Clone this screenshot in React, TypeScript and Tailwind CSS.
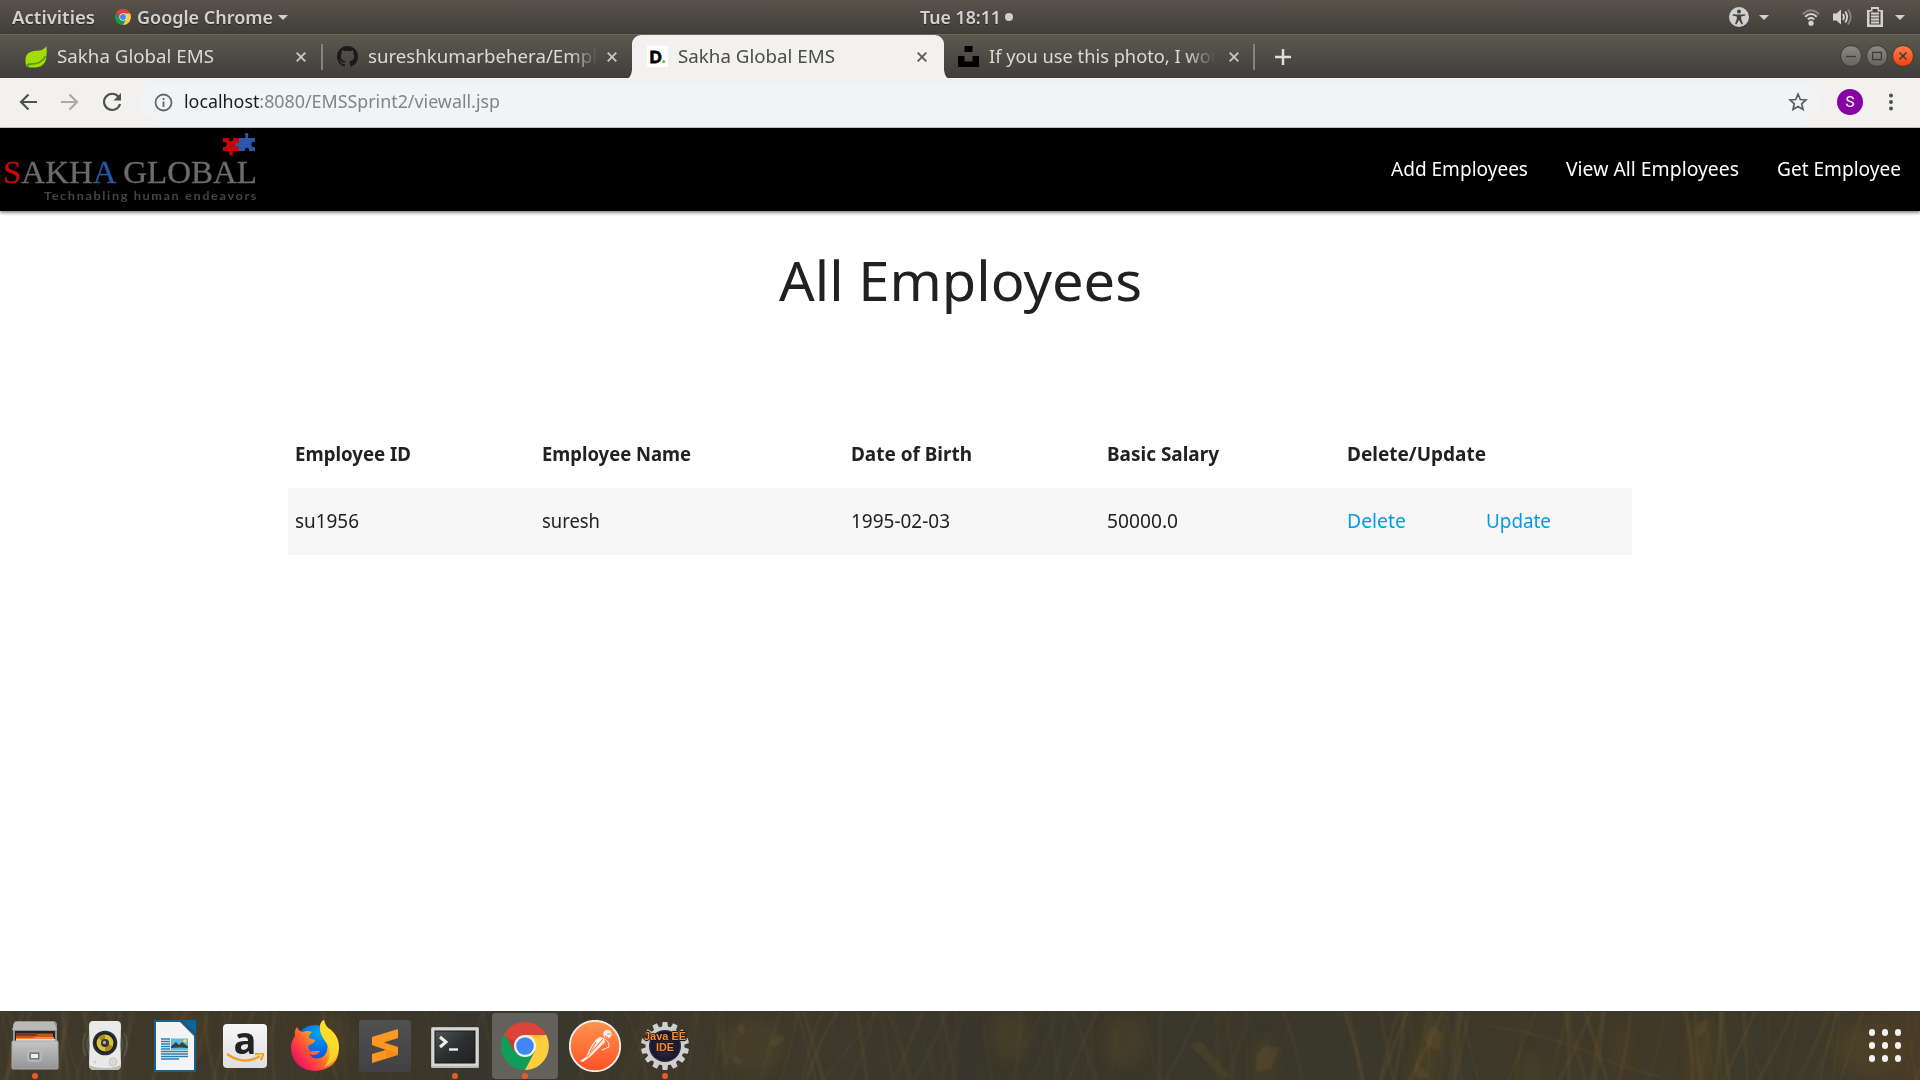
import React, { useLayoutEffect, useRef, useState } from "react";

/** Single line label condensed or widened horizontally to occupy exactly `w` pixels. */
function Label({ w, className = "", children }: { w: number; className?: string; children: React.ReactNode }) {
  const ref = useRef<HTMLSpanElement>(null);
  const [scale, setScale] = useState(1);
  useLayoutEffect(() => {
    if (ref.current) setScale(w / ref.current.getBoundingClientRect().width);
  }, [w]);
  return (
    <span className="block shrink-0 overflow-visible whitespace-nowrap" style={{ width: w }}>
      <span ref={ref} className={"inline-block origin-left align-top " + className} style={{ transform: `scaleX(${scale})` }}>
        {children}
      </span>
    </span>
  );
}

function ChromeLogo({ className }: { className: string }) {
  return (
    <svg viewBox="0 0 48 48" className={className}>
      <path d="M24 24 L3.2 12 A24 24 0 0 1 44.8 12 Z" fill="#db4437" />
      <path d="M24 24 L3.2 12 A24 24 0 0 0 24 48 L34.4 30 Z" fill="#0f9d58" />
      <path d="M24 13 H45.2 A24 24 0 0 1 24 48 L34 29 Z" fill="#ffcd40" />
      <path d="M3.6 12 L13.6 29.5 L24 13 H45.2 A24 24 0 0 0 3.6 12Z" fill="#db4437" />
      <path d="M5 15 L13.6 29.5 L15 20Z" fill="#9b2f2a" opacity=".35" />
      <path d="M34 16 L45 13 L32 13Z" fill="#c58a1b" opacity=".3" />
      <circle cx="24" cy="24" r="11" fill="#f1f1f1" />
      <circle cx="24" cy="24" r="8.8" fill="#4285f4" />
    </svg>
  );
}

function Caret({ className = "" }: { className?: string }) {
  return (
    <svg viewBox="0 0 10 5" className={"h-[5px] w-[10px] shrink-0 " + className}>
      <path d="M0 0H10L5 5Z" fill="#cfcfcc" />
    </svg>
  );
}

function TopBar() {
  return (
    <div className="flex h-[34px] items-center bg-linear-to-b from-[#58544c] to-[#403e38] text-[17.5px] leading-none font-semibold text-[#d3d2cf] [text-shadow:0_1px_1px_rgba(0,0,0,0.5)]">
      <div className="flex w-[920px] items-center pl-[12px]">
        <Label w={83} className="pt-px">Activities</Label>
        <ChromeLogo className="ml-5 h-4 w-4" />
        <div className="ml-[6px]"><Label w={136} className="pt-px">Google Chrome</Label></div>
        <Caret className="ml-[5px]" />
      </div>
      <Label w={81} className="pt-px">Tue 18:11</Label>
      <div className="ml-1 h-2 w-2 rounded-full bg-[#d0cfcc]" />
      <div className="ml-auto flex items-center pr-[15px]">
        <svg viewBox="0 0 20 20" className="h-5 w-5">
          <circle cx="10" cy="10" r="10" fill="#d0d0ce" />
          <circle cx="10" cy="4.6" r="2" fill="#45433d" />
          <path d="M3.7 7.2 L8 7.6 H12 L16.3 7.2 V8.6 L12.2 9.4 V12 L14 17 L12.6 17.5 L10 13 L7.4 17.5 L6 17 L7.8 12 V9.4 L3.7 8.6Z" fill="#45433d" />
        </svg>
        <Caret className="ml-[10px]" />
        <svg viewBox="0 0 18 17" className="ml-[33px] h-[17px] w-[18px]" fill="none" strokeWidth="2">
          <path d="M.8 5.2 Q9 -2.8 17.2 5.2" stroke="#858480" />
          <path d="M3.2 7.8 Q9 2.2 14.8 7.8M5.8 10.4 Q9 7.4 12.2 10.4" stroke="#d3d2cf" />
          <circle cx="9" cy="14.2" r="2.6" fill="#d3d2cf" />
        </svg>
        <svg viewBox="0 0 20 18" className="ml-[13px] h-[18px] w-5" fill="none" strokeWidth="1.8">
          <path d="M0 5.5H3.5L8 1.5V16.5L3.5 12.5H0Z" fill="#d3d2cf" />
          <path d="M10 6Q12 9 10 12M12.3 3.6Q16 9 12.3 14.4" stroke="#d3d2cf" />
          <path d="M15 1.5Q20.5 9 15 16.5" stroke="#858480" />
        </svg>
        <svg viewBox="0 0 16 20" className="ml-[14px] h-5 w-4">
          <path d="M4 0H12V3H16V20H0V3H4Z" fill="#d3d2cf" />
          <path d="M5.5 2H10.5V4.5H13.5V17.5H2.5V4.5H5.5Z" fill="#47453f" />
          <path d="M4 6.5H12M4 9.5H12M4 12.5H12M4 15.5H12" stroke="#d3d2cf" strokeWidth="1.8" />
        </svg>
        <Caret className="ml-3" />
      </div>
    </div>
  );
}

function Close({ color, className = "" }: { color: string; className?: string }) {
  return (
    <svg viewBox="0 0 10 10" className={"h-[10px] w-[10px] shrink-0 " + className}>
      <path d="M.7 .7L9.3 9.3M9.3 .7L.7 9.3" stroke={color} strokeWidth="1.9" />
    </svg>
  );
}

function WindowButton({ kind }: { kind: "min" | "max" | "close" }) {
  const close = kind === "close";
  return (
    <div
      className={
        "flex h-[22px] w-[22px] items-center justify-center rounded-full border bg-linear-to-b " +
        (close ? "border-[#46392f] from-[#ff7a4a] to-[#ee4200]" : "border-[#3b3a35] from-[#8b8a82] to-[#64635c]")
      }
    >
      <svg viewBox="0 0 10 10" className="h-[10px] w-[10px]" fill="none" stroke="#3c3b36" strokeWidth="1.3">
        {kind === "min" && <path d="M0 5.5H10" />}
        {kind === "max" && <rect x=".6" y="1.4" width="8.8" height="7.2" />}
        {close && <path d="M1.5 1.5L8.5 8.5M8.5 1.5L1.5 8.5" strokeWidth="1.6" />}
      </svg>
    </div>
  );
}

function TabStrip() {
  return (
    <div className="flex h-11 items-center border-t border-[#6a6860] bg-linear-to-b from-[#5b594f] to-[#403e39] text-[18px] leading-none text-[#dcdad2]">
      <div className="flex w-[321px] items-center pl-[25px]">
        <svg viewBox="0 0 22 22" className="h-[22px] w-[22px]">
          <path d="M21.4 0C18 5 14 4.500 9 5C3 6 .5 9 .5 14C.3 17 .8 19.500 2.6 21C12 22.600 20 21 21.200 12C21.900 7 21.800 3 21.400 0Z" fill="#a5dc08" />
          <path d="M20.500 10C18 16 12 18.500 3 18.200" fill="none" stroke="#4d9d13" strokeWidth="1.700" />
          <circle cx="2.800" cy="19.500" r="1.400" fill="#5e9e16" />
        </svg>
        <div className="ml-[10px]"><Label w={157} className="pb-[2px]">Sakha Global EMS</Label></div>
        <Close color="#c9c7be" className="ml-[82px]" />
      </div>
      <div className="h-[26px] w-[2px] bg-[#85837b]" />
      <div className="flex w-[309px] items-center pl-[14px]">
        <svg viewBox="0 0 16 16" className="h-[21px] w-[21px]">
          <path fill="#191a1b" d="M8 0C3.58 0 0 3.58 0 8c0 3.54 2.29 6.53 5.47 7.59.4.07.55-.17.55-.38 0-.19-.01-.82-.01-1.49-2.01.37-2.53-.49-2.690-.94-.09-.23-.48-.94-.82-1.13-.28-.15-.68-.52-.01-.53.63-.01 1.080.58 1.230.82.720 1.210 1.870.870 2.330.660.070-.520.280-.870.510-1.070-1.780-.2-3.640-.890-3.640-3.950 0-.870.310-1.590.820-2.150-.080-.2-.360-1.020.080-2.120 0 0 .670-.210 2.200.820.640-.180 1.320-.270 2-.270s1.360.090 2 .270c1.530-1.040 2.200-.820 2.200-.820.440 1.100.160 1.920.080 2.120.510.560.820 1.270.820 2.150 0 3.070-1.870 3.750-3.650 3.950.290.250.540.730.540 1.480 0 1.070-.010 1.930-.010 2.200 0 .210.150.460.550.380A8.010 8.010 0 0 0 16 8c0-4.420-3.580-8-8-8z" />
        </svg>
        <div className="ml-[10px] w-[230px] mask-r-from-88% mask-r-to-100%">
          <Label w={229} className="pt-[3px] pb-[5px]">sureshkumarbehera/Empl</Label>
        </div>
        <Close color="#c9c7be" className="ml-[9px]" />
      </div>
      <div className="relative flex h-[45px] w-[312px] items-center self-start rounded-t-[9px] bg-[#f2f1ef] pb-[2px] pl-[15px] text-[#4b4b49]">
        <svg viewBox="0 0 7 9" className="absolute -left-[7px] bottom-[1px] h-[9px] w-[7px]"><path d="M7 0V9H0Q6 9 7 0Z" fill="#f2f1ef" /></svg>
        <svg viewBox="0 0 7 9" className="absolute -right-[7px] bottom-[1px] h-[9px] w-[7px]"><path d="M0 0V9H7Q1 9 0 0Z" fill="#f2f1ef" /></svg>
        <div className="flex h-[21px] w-[21px] items-center justify-center bg-white font-['Lato'] text-[16px] font-black text-black">
          <span className="[-webkit-text-stroke:0.8px_currentColor]">D</span><span className="text-[#62b61c]">.</span>
        </div>
        <div className="ml-[10px]"><Label w={157} className="pb-px">Sakha Global EMS</Label></div>
        <Close color="#5a5a58" className="ml-[82px]" />
      </div>
      <div className="flex w-[309px] items-center pl-[14px]">
        <svg viewBox="0 0 21 21" className="h-[21px] w-[21px]"><path d="M6.500 0H14.500V6H6.500ZM0 10H6.500V15.500H14.500V10H21V21H0Z" fill="#000" /></svg>
        <div className="ml-[10px] w-[229px] mask-r-from-86% mask-r-to-99%">
          <Label w={233} className="pt-[3px] pb-[5px]">If you use this photo, I wou</Label>
        </div>
        <Close color="#c9c7be" className="ml-[11px]" />
      </div>
      <div className="h-[26px] w-[2px] bg-[#85837b]" />
      <svg viewBox="0 0 16 16" className="ml-5 h-4 w-4"><path d="M8 0V16M0 8H16" stroke="#e0ded5" strokeWidth="2.500" /></svg>
      <div className="ml-auto flex gap-1 pr-[6px] pb-px">
        <WindowButton kind="min" />
        <WindowButton kind="max" />
        <WindowButton kind="close" />
      </div>
    </div>
  );
}

function Toolbar() {
  return (
    <div className="flex h-[50px] items-center border-b border-[#c4c4c4] bg-[#f2f1ef] pb-px">
      <svg viewBox="0 0 18 18" className="ml-[19px] h-[18px] w-[18px]" fill="none" stroke="#505050" strokeWidth="2.200"><path d="M18 9H2.500M9.500 1.500L2 9L9.500 16.500" /></svg>
      <svg viewBox="0 0 18 18" className="ml-6 h-[18px] w-[18px]" fill="none" stroke="#aaa9a7" strokeWidth="2.200"><path d="M0 9H15.500M8.500 1.500L16 9L8.500 16.500" /></svg>
      <svg viewBox="0 0 20 20" className="ml-[23px] h-5 w-5" fill="none" stroke="#505050" strokeWidth="2.200">
        <path d="M16.500 4.800A8.100 8.100 0 1 0 18 12" />
        <path d="M19 1V8.500H11.500Z" fill="#505050" stroke="none" />
      </svg>
      <div className="ml-[18px] flex h-[38px] w-[1681px] items-center rounded-full bg-[#f1f3f5] pl-[14px] text-[17.700px] leading-none text-[#80858a]">
        <svg viewBox="0 0 19 19" className="h-[19px] w-[19px]" fill="none" stroke="#62676b" strokeWidth="1.800">
          <circle cx="9.500" cy="9.500" r="8" />
          <path d="M9.500 8.500V14M9.500 5V6.900" />
        </svg>
        <div className="ml-[11px]">
          <Label w={316}>
            <span className="text-[#1b1c1e]">localhost</span>:8080/EMSSprint2/viewall.jsp
          </Label>
        </div>
        <svg viewBox="0 0 20 20" className="mr-[13px] ml-auto h-5 w-5" fill="none" stroke="#5b5f63" strokeWidth="1.700"><path d="M10 2.200L12.300 7.500L18 8L13.700 11.800L15 17.400L10 14.400L5 17.400L6.300 11.800L2 8L7.700 7.500Z" /></svg>
      </div>
      <div className="ml-[16px] flex h-[26px] w-[26px] items-center justify-center rounded-full bg-[#8701a5] font-['Roboto'] text-[15px] leading-none text-white">S</div>
      <svg viewBox="0 0 4 18" className="ml-[26px] h-[18px] w-1" fill="#505050"><circle cx="2" cy="2.500" r="2" /><circle cx="2" cy="9" r="2" /><circle cx="2" cy="15.500" r="2" /></svg>
    </div>
  );
}

function SiteHeader() {
  return (
    <header className="relative flex h-[83px] items-center bg-black shadow-[0_2px_3px_rgba(0,0,0,0.45)]">
      <div className="flex h-full w-[256px] flex-col pl-[3px] leading-none">
        <svg viewBox="0 0 34 24" className="mt-1 ml-auto h-[24px] w-[34px]">
          <path d="M1 6H7V8Q9 10.500 11 8V6H17V19H10.500V20.500Q11.500 23.500 9 23.500Q6.500 23.500 7.500 20.500V19H1V15Q4.500 16 4.500 12.500Q4.500 9 1 10Z" fill="#c90308" />
          <path d="M17 6H23.500V4Q22 1 24.700 1Q27.500 1 26 4V6H33V10Q29.500 9 29.500 12.500Q29.500 16 33 15V19H27V17Q25 14.500 23 17V19H17V14.500Q13 15.500 13 12.500Q13 10 17 11Z" fill="#2b57ab" />
        </svg>
        <Label w={254} className="font-['Liberation_Serif'] text-[32px] text-[#6b6b6e] [-webkit-text-stroke:0.3px_currentColor]">
          <span className="text-[#d40808]">S</span>AKH<span className="text-[#2855a5]">A</span> GLOBAL
        </Label>
        <div className="pt-[2px] pl-[41px]">
          <Label w={214} className="font-['Lato'] text-[12px] font-bold tracking-[1.500px] text-[#444447]">Technabling human endeavors</Label>
        </div>
      </div>
      <nav className="mr-[19px] mb-[2px] ml-auto flex gap-[38px] text-[19.300px] leading-none text-white">
        <Label w={137}>Add Employees</Label>
        <Label w={173}>View All Employees</Label>
        <Label w={124}>Get Employee</Label>
      </nav>
    </header>
  );
}

const columns: [string, number][] = [
  ["Employee ID", 116],
  ["Employee Name", 149],
  ["Date of Birth", 121],
  ["Basic Salary", 112],
  ["Delete/Update", 139],
];

const employee: [string, number, boolean][] = [
  ["su1956", 64, false],
  ["suresh", 58, false],
  ["1995-02-03", 99, false],
  ["50000.0", 71, false],
  ["Delete", 59, true],
  ["Update", 65, true],
];

function EmployeeTable() {
  return (
    <div className="mx-auto mt-[103px] w-[1344px] text-[19.300px] leading-none text-[#212121]">
      <div className="grid h-[67px] grid-cols-[247px_309px_256px_240px_139px_1fr] items-center pb-[2px] font-bold">
        {columns.map(([name, w]) => (
          <div key={name} className="pl-[7px]"><Label w={w}>{name}</Label></div>
        ))}
      </div>
      <div className="grid h-[67px] grid-cols-[247px_309px_256px_240px_139px_1fr] items-center bg-[#f7f7f7] pb-[2px]">
        {employee.map(([value, w, link]) => (
          <div key={value} className={"pl-[7px] " + (link ? "text-[#039be5]" : "")}><Label w={w}>{value}</Label></div>
        ))}
      </div>
    </div>
  );
}

/** Grass stalks in the wallpaper behind the dock. */
const stalks = Array.from({ length: 260 }, (_, i) => {
  const r = (n: number) => { const v = Math.sin(i * 127.1 + n * 311.7) * 43758.5453; return v - Math.floor(v); };
  const x = r(1) * 1960 - 20;
  const lit = x > 1340 || x < 350 || (x > 720 && x < 880);
  return { x, top: x + (r(2) - 0.4) * 60, bend: (r(3) - 0.5) * 10, alpha: 0.03 + r(4) * (lit ? 0.2 : 0.09), width: 0.8 + r(5) * 2.5 };
});
const ears = [[752, 35, 46], [330, 30, 28], [185, 20, 26], [1010, 24, 28], [1125, 30, 30], [1264, 52, 14], [1433, 28, 15], [1425, 60, 18], [1532, 66, 16], [1622, 38, 8], [1702, 36, 18], [1700, 66, 14], [1870, 38, 50]];

function Wallpaper() {
  return (
    <svg viewBox="0 0 1920 69" className="absolute inset-0 h-full w-full" fill="none">
      <defs>
        <filter id="soft" x="-20%" y="-20%" width="140%" height="140%"><feGaussianBlur stdDeviation="7" /></filter>
        <filter id="fine"><feGaussianBlur stdDeviation=".8" /></filter>
        <linearGradient id="field">
          <stop offset="0" stopColor="#3d382b" /><stop offset=".14" stopColor="#40382a" /><stop offset=".25" stopColor="#38362c" />
          <stop offset=".4" stopColor="#3e392b" /><stop offset=".5" stopColor="#39372c" /><stop offset=".7" stopColor="#3a382b" />
          <stop offset=".86" stopColor="#413928" /><stop offset=".93" stopColor="#3b392b" /><stop offset="1" stopColor="#493c28" />
        </linearGradient>
      </defs>
      <rect width="1920" height="69" fill="url(#field)" />
      <g filter="url(#soft)">
        {ears.map(([x, y, w], i) => <ellipse key={i} cx={x} cy={y} rx={w * 0.7} ry="26" fill="#66502a" opacity=".24" />)}
      </g>
      <g filter="url(#fine)">
        {stalks.map((s, i) => (
          <path key={i} d={`M${s.x} 70Q${(s.x + s.top) / 2 + s.bend} 35 ${s.top} -1`} stroke="#8a6a3a" strokeOpacity={s.alpha} strokeWidth={s.width} />
        ))}
        <path d="M824 68L877 0M1490 15Q1560 25 1615 53Q1640 60 1660 66" stroke="#75592f" strokeOpacity=".45" />
        <path d="M1190 34L1200 29L1232 67H1222Z" fill="#50482a" fillOpacity=".5" />
        <path d="M736 16l6 -4l4 6l-3 6zM770 30l12 -6l2 6l-10 6zM732 44l8 4l2 7l-8 -3zM1424 25l8 -10l12 8l-6 16l-10 -4zM1415 52l8 4l6 10l-10 2zM1696 16q8 -10 14 -6l-6 12l-6 4zM1256 44q8 -12 14 -9l10 2l-8 20l-16 4z" fill="#80602f" fillOpacity=".22" />
      </g>
      <path d="M0 .5H1920" stroke="#353c2e" />
    </svg>
  );
}

function FilesIcon() {
  return (
    <svg viewBox="0 0 48 50" className="h-[50px] w-12">
      <defs><linearGradient id="cab" x2="0" y2="1"><stop stopColor="#c4c4c4" /><stop offset="1" stopColor="#949494" /></linearGradient></defs>
      <path d="M3 2Q3 0 6 0H42Q45 0 46 3V44H2V3Z" fill="#929292" />
      <path d="M4 1H43L46 9H1Z" fill="#b9b9b9" />
      <rect x="4" y="10" width="40" height="11" fill="#28201c" />
      <path d="M5 12H42V15H5Z" fill="#8b3410" /><path d="M5 15H25L27 13H42V17H5Z" fill="#c95514" />
      <path d="M5 17H22L24 16H43V19H5Z" fill="#f08c42" /><path d="M5 18H44V21H5Z" fill="#ebdbc8" />
      <rect x="1" y="20" width="46" height="28" rx="1" fill="url(#cab)" stroke="#aaa" />
      <rect x="17" y="30" width="13" height="10" rx="2" fill="#969696" stroke="#cecece" />
      <rect x="19.500" y="32.500" width="8" height="5" fill="#eee" stroke="#777" />
    </svg>
  );
}

function SpeakerIcon() {
  return (
    <svg viewBox="0 0 52 50" className="h-[50px] w-[52px]" fill="none">
      <path d="M7 12Q1 23 7 35M11 13Q6 23 11 34M45 12Q51 23 45 35M41 13Q46 23 41 34" stroke="#6f8792" strokeOpacity=".3" strokeWidth="2" />
      <path d="M14 0H38Q42 0 42 5Q41 24 42 44Q42 49 37 49H15Q10 49 10 44Q11 24 10 5Q10 0 14 0Z" fill="#e9e9e8" />
      <path d="M10 43Q10 49 15 49H37Q42 49 42 43Q39 47 26 47Q13 47 10 43Z" fill="#bdbdbc" />
      <circle cx="26" cy="22" r="12.300" fill="#2b2d31" /><circle cx="26" cy="22" r="10" fill="#10192b" />
      <circle cx="26" cy="22" r="8.500" fill="#d9c132" /><path d="M26 22L19 17A8.500 8.500 0 0 1 26 13.500ZM26 22L34 25A8.500 8.500 0 0 1 26 30.500Z" fill="#a68d17" />
      <circle cx="26" cy="22" r="4" fill="#33343a" /><circle cx="25.500" cy="21.500" r="1.700" fill="#aaa" />
      <circle cx="34" cy="41" r="4" fill="#d9d9d9" stroke="#c4c4c4" /><circle cx="16" cy="41" r="1.500" fill="#d0d0d0" />
    </svg>
  );
}

function WriterIcon() {
  return (
    <svg viewBox="0 0 42 52" className="h-[52px] w-[42px]">
      <path d="M0 0H27L42 15V52H0Z" fill="#17618e" />
      <path d="M28 0H42V14Z" fill="#0567a3" />
      <path d="M2 2H26L40 16V50H2Z" fill="#f4f4f4" />
      <path d="M7 19H16M7 21.500H16M7 24H16M7 26.500H16M7 29H16M7 31.500H34M7 34H34M7 36.500H34M7 39H25" stroke="#2580b8" strokeWidth="1.300" />
      <rect x="17" y="18.500" width="17" height="11.500" fill="#62b9df" />
      <path d="M17 28V26.500L22 22L25 25L28 22L34 26.500V28Q26 27 17 28Z" fill="#34423d" /><circle cx="31" cy="21" r="1.800" fill="#f5df57" />
    </svg>
  );
}

function AmazonIcon() {
  return (
    <div className="flex h-11 w-11 flex-col items-center rounded-[4px] bg-linear-to-b from-[#f7f7f7] to-[#dedee0]">
      <div className="-mt-[12px] h-[43px] font-['Open_Sans'] text-[38px] leading-[54px] font-bold text-[#222]">a</div>
      <svg viewBox="0 0 38 10" className="-mt-[2px] h-[10px] w-[38px]" fill="none" stroke="#f79a22" strokeWidth="2.200"><path d="M1 1Q18 13 34 3M29 1.500Q36 -.5 37 1Q37 4 34.500 7" /></svg>
    </div>
  );
}

function FirefoxIcon() {
  return (
    <svg viewBox="0 0 50 52" className="h-[52px] w-[50px]">
      <defs>
        <linearGradient id="fox" x1=".9" y1=".1" x2=".1" y2=".8"><stop stopColor="#ffe226" /><stop offset=".4" stopColor="#ffae1c" /><stop offset=".7" stopColor="#ff5038" /><stop offset="1" stopColor="#ee1461" /></linearGradient>
        <radialGradient id="globe" cx=".6" cy=".2" r=".9"><stop stopColor="#00a9f4" /><stop offset=".6" stopColor="#0761df" /><stop offset="1" stopColor="#331b92" /></radialGradient>
      </defs>
      <circle cx="25" cy="25" r="20" fill="url(#globe)" />
      <path d="M7 7Q9 12 13 12Q17 10 22 12Q18 16 19 18L25 20Q25 23 19 25Q17 29 21 31Q26 31 30 31Q26 37 19 34Q25 42 34 36Q40 29 36 22Q29 14 30 6Q31 1 34 0Q35 7 41 10Q50 18 49 29Q48 49 25 51Q7 50 2 35Q-1 23 5 16Q4 10 7 7Z" fill="url(#fox)" />
      <path d="M30 6Q31 1 34 0Q35 7 41 10Q50 18 48 31Q45 43 34 47Q43 37 38 25Q29 14 30 6Z" fill="#ffe12e" opacity=".75" />
    </svg>
  );
}

function SublimeIcon() {
  return (
    <div className="flex h-[52px] w-[52px] items-center justify-center rounded-[3px] bg-linear-to-b from-[#505050] to-[#424245]">
      <svg viewBox="0 0 26 34" className="h-[34px] w-[26px]">
        <path d="M0 8L26 0V9L12 13.500L26 18V26L0 34V25L14 21L0 16Z" fill="#ff981f" />
        <path d="M0 16L26 24V26L14 29.500L14 21Z" fill="#d97910" opacity=".35" />
      </svg>
    </div>
  );
}

function TerminalIcon() {
  return (
    <svg viewBox="0 0 48 42" className="mt-1 h-[42px] w-12">
      <defs><linearGradient id="term" x2="1" y2="1"><stop stopColor="#505454" /><stop offset=".5" stopColor="#2c2f2f" /><stop offset="1" stopColor="#202222" /></linearGradient></defs>
      <rect width="48" height="41" rx="1.500" fill="#b8bab8" /><rect x="1" y="1" width="46" height="38" fill="#d6d7d5" />
      <rect x="4" y="4" width="40" height="32" fill="url(#term)" stroke="#161818" />
      <path d="M9 10L15 15L9 20" fill="none" stroke="#eee" strokeWidth="3" /><path d="M18 22.500H27" stroke="#eee" strokeWidth="2.400" />
    </svg>
  );
}

function PostmanIcon() {
  return (
    <svg viewBox="0 0 52 52" className="h-[52px] w-[52px]">
      <defs><linearGradient id="pm" x2="0" y2="1"><stop stopColor="#ff954e" /><stop offset="1" stopColor="#ff5126" /></linearGradient></defs>
      <circle cx="26" cy="26" r="25.200" fill="url(#pm)" stroke="#f7eee7" strokeWidth="1.800" />
      <path d="M35 18L31 17Q26 19 20 30L17 37L11 41L14 42L22 36L36 22Z" fill="#fff0e6" />
      <circle cx="38.500" cy="14" r="4.300" fill="#fff0e6" />
      <path d="M18 37L34 19M27 22L21 32M38 14H42M36 16L39 18" stroke="#ff7640" strokeWidth="1.100" fill="none" />
      <path d="M36 19Q41 22 40 27L33 30" fill="none" stroke="#fff0e6" strokeWidth="1" />
    </svg>
  );
}

function JavaIcon() {
  return (
    <div className="relative flex h-[50px] w-[50px] items-center justify-center">
      <svg viewBox="-25 -25 50 50" className="absolute inset-0 h-full w-full">
        <defs><radialGradient id="planet"><stop stopColor="#423963" /><stop offset="1" stopColor="#17142b" /></radialGradient></defs>
        {Array.from({ length: 14 }, (_, i) => (
          <path key={i} d="M-3.200 -17L-2.400 -24H2.400L3.200 -17Z" fill="#cfcfcf" transform={`rotate(${(i * 360) / 14})`} />
        ))}
        <circle r="19.500" fill="#cfcfcf" /><circle r="16" fill="#2b2838" /><circle r="14.500" fill="url(#planet)" />
      </svg>
      <div className="relative -mt-[8px] flex flex-col items-center font-['Liberation_Sans'] text-[11.500px] leading-[11px] font-bold text-[#ff8b2e] [text-shadow:1px_0_0_#1c1310,-1px_0_0_#1c1310,0_1px_0_#1c1310,0_-1px_0_#1c1310,0_0_3px_#000]">
        <Label w={42}>Java EE</Label>
        <Label w={18}>IDE</Label>
      </div>
    </div>
  );
}

function Dock() {
  const apps: { icon: React.ReactNode; running?: boolean; active?: boolean }[] = [
    { icon: <FilesIcon />, running: true },
    { icon: <SpeakerIcon /> },
    { icon: <WriterIcon /> },
    { icon: <AmazonIcon /> },
    { icon: <FirefoxIcon /> },
    { icon: <SublimeIcon /> },
    { icon: <TerminalIcon />, running: true },
    { icon: <ChromeLogo className="h-12 w-12" />, running: true, active: true },
    { icon: <PostmanIcon /> },
    { icon: <JavaIcon />, running: true },
  ];
  return (
    <div className="relative h-[69px] overflow-hidden">
      <Wallpaper />
      <div className="relative flex h-full items-center">
        {apps.map((app, i) => (
          <div key={i} className="relative flex h-[69px] w-[70px] items-center justify-center">
            <div className={"flex h-[66px] w-[66px] items-center justify-center rounded-[4px] " + (app.active ? "bg-[#62615b]" : "")}>{app.icon}</div>
            {app.running && <div className="absolute bottom-px left-8 h-[6px] w-[6px] rounded-full bg-[#ec5a26]" />}
          </div>
        ))}
        <div className="mr-[19px] ml-auto grid grid-cols-3 gap-[6.500px]">
          {Array.from({ length: 9 }, (_, i) => <div key={i} className="h-[6.500px] w-[6.500px] rounded-full bg-[#f2f2f0]" />)}
        </div>
      </div>
    </div>
  );
}

export default function App() {
  return (
    <div className="flex h-[1080px] w-[1920px] flex-col overflow-hidden bg-white font-['Noto_Sans',sans-serif]">
      <TopBar />
      <TabStrip />
      <Toolbar />
      <SiteHeader />
      <main className="flex-1">
        <h1 className="mt-[31px] flex h-[76px] items-center justify-center pb-px text-[55.500px] leading-none text-[#212121]">
          <Label w={363}>All Employees</Label>
        </h1>
        <EmployeeTable />
      </main>
      <Dock />
    </div>
  );
}
